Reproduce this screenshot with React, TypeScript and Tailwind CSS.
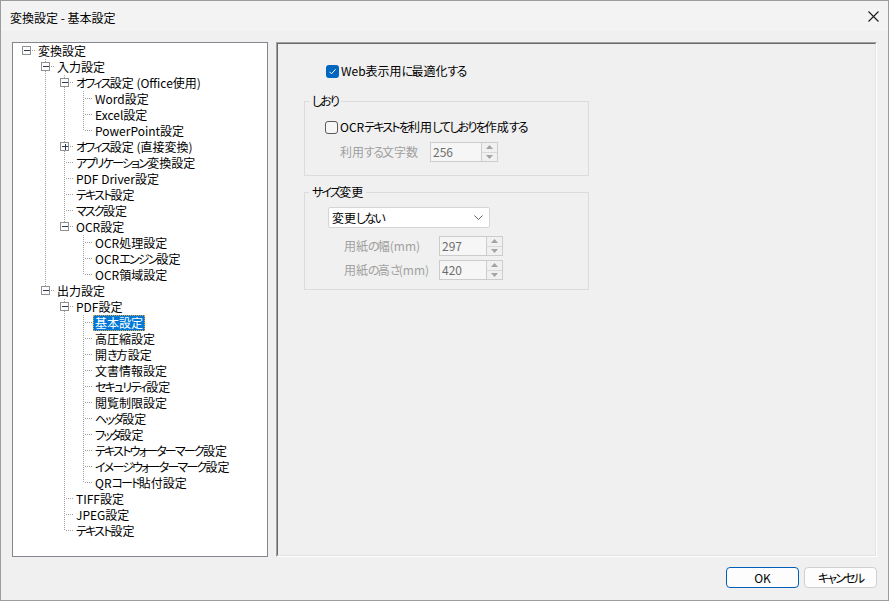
import React from 'react';

interface TreeNode {
  label: string;
  children?: TreeNode[];
  collapsed?: boolean;
  selected?: boolean;
}

interface Row {
  label: string;
  level: number;
  guides: boolean[];
  isLast: boolean;
  isRoot: boolean;
  box: 'minus' | 'plus' | null;
  selected: boolean;
}

const leaf = (label: string, selected = false): TreeNode => ({ label, selected });

const tree: TreeNode = {
  label: '変換設定',
  children: [
    {
      label: '入力設定',
      children: [
        { label: 'オフィス設定 (Office使用)', children: [leaf('Word設定'), leaf('Excel設定'), leaf('PowerPoint設定')] },
        { label: 'オフィス設定 (直接変換)', collapsed: true },
        leaf('アプリケーション変換設定'),
        leaf('PDF Driver設定'),
        leaf('テキスト設定'),
        leaf('マスク設定'),
        { label: 'OCR設定', children: [leaf('OCR処理設定'), leaf('OCRエンジン設定'), leaf('OCR領域設定')] },
      ],
    },
    {
      label: '出力設定',
      children: [
        {
          label: 'PDF設定',
          children: [
            leaf('基本設定', true),
            leaf('高圧縮設定'),
            leaf('開き方設定'),
            leaf('文書情報設定'),
            leaf('セキュリティ設定'),
            leaf('閲覧制限設定'),
            leaf('ヘッダ設定'),
            leaf('フッタ設定'),
            leaf('テキストウォーターマーク設定'),
            leaf('イメージウォーターマーク設定'),
            leaf('QRコード貼付設定'),
          ],
        },
        leaf('TIFF設定'),
        leaf('JPEG設定'),
        leaf('テキスト設定'),
      ],
    },
  ],
};

const flatten = (node: TreeNode, level: number, guides: boolean[], isLast: boolean, isRoot: boolean, out: Row[]) => {
  const expandable = !!node.children || !!node.collapsed;
  out.push({
    label: node.label,
    level,
    guides,
    isLast,
    isRoot,
    box: expandable ? (node.collapsed ? 'plus' : 'minus') : null,
    selected: !!node.selected,
  });
  if (node.children && !node.collapsed) {
    node.children.forEach((child, i) => {
      const last = i === node.children!.length - 1;
      // the root has no siblings, so no guide runs down its column
      flatten(child, level + 1, [...guides, isRoot ? false : !isLast], last, false, out);
    });
  }
};

const rows: Row[] = [];
flatten(tree, 0, [], true, true, rows);

// the UI font has narrow kana, so pull kana runs tighter
const Jp: React.FC<{ text: string }> = ({ text }) => {
  const parts = text.split(/([\u3040-\u30ff]+)/);
  return (
    <>
      {parts.map((p, i) =>
        /^[\u3040-\u30ff]+$/.test(p) ? (
          <span key={i} className="tracking-[-1.8px]">{p}</span>
        ) : (
          <span key={i}>{p}</span>
        )
      )}
    </>
  );
};

const LINE = '#a0a0a0';

const Connector: React.FC<{ row: Row }> = ({ row }) => {
  const w = 19 * (row.level + 1);
  const cx = 19 * row.level + 9.5;
  return (
    <svg width={w} height={16} className="shrink-0" shapeRendering="crispEdges">
      {row.guides.map((g, i) =>
        g ? <line key={i} x1={19 * i + 9.5} y1={0} x2={19 * i + 9.5} y2={16} stroke={LINE} strokeDasharray="1 1" /> : null
      )}
      {!row.isRoot && <line x1={cx} y1={0} x2={cx} y2={row.isLast ? 8 : 16} stroke={LINE} strokeDasharray="1 1" />}
      <line x1={cx + 1} y1={7.5} x2={w} y2={7.5} stroke={LINE} strokeDasharray="1 1" />
      {row.box && (
        <g>
          <rect x={cx - 4} y={3.5} width={8} height={8} fill="#fdfdfd" stroke="#919191" />
          <line x1={cx - 2.5} y1={7.5} x2={cx + 3.5} y2={7.5} stroke="#2b3a55" />
          {row.box === 'plus' && <line x1={cx + 0.5} y1={5} x2={cx + 0.5} y2={11} stroke="#2b3a55" />}
        </g>
      )}
    </svg>
  );
};

const Checkbox: React.FC<{ checked?: boolean; label: string }> = ({ checked, label }) => (
  <div className="flex items-center h-4">
    {checked ? (
      <span className="w-[13px] h-[13px] rounded-[3px] bg-[#0067c0] flex items-center justify-center">
        <svg width="9" height="9" viewBox="0 0 9 9">
          <path d="M1.5 4.8 L3.5 6.8 L7.6 2.2" fill="none" stroke="#ffffff" strokeWidth="1" />
        </svg>
      </span>
    ) : (
      <span className="w-[13px] h-[13px] rounded-[3px] border border-[#5b5b5b] bg-[#f6f6f6]" />
    )}
    <span className="ml-[2px] text-black whitespace-nowrap"><Jp text={label} /></span>
  </div>
);

const Spin: React.FC<{ value: string; width: number }> = ({ value, width }) => (
  <div className="flex h-5 border border-[#cccccc] bg-[#f6f6f6]" style={{ width }}>
    <div className="flex-1 pl-[2px] flex items-center text-[#6d6d6d]">{value}</div>
    <div className="w-[16px] flex flex-col border-l border-[#cccccc]">
      <div className="flex-1 flex items-center justify-center border-b border-[#d9d9d9] bg-[#f0f0f0]">
        <svg width="7" height="4" viewBox="0 0 7 4"><path d="M0 4 L3.5 0 L7 4 Z" fill="#a3a3a3" /></svg>
      </div>
      <div className="flex-1 flex items-center justify-center bg-[#f0f0f0]">
        <svg width="7" height="4" viewBox="0 0 7 4"><path d="M0 0 L3.5 4 L7 0 Z" fill="#a3a3a3" /></svg>
      </div>
    </div>
  </div>
);

const App: React.FC = () => {
  return (
    <div className="w-[889px] h-[601px] border border-[#9c9c9c] bg-[#f0f0f0] flex flex-col text-[12px] leading-4 text-black font-['Noto_Sans_CJK_JP',sans-serif] [font-feature-settings:'palt'] overflow-hidden">
      {/* title bar */}
      <div className="h-[30px] shrink-0 bg-[#f3f3f3] flex items-center justify-between pl-[9px] pr-[9px] pt-[3px]">
        <span className="text-[12px]">変換設定 - 基本設定</span>
        <svg width="11" height="11" viewBox="0 0 11 11" className="mb-[2px]">
          <path d="M0.5 0.5 L10.5 10.5 M10.5 0.5 L0.5 10.5" stroke="#1a1a1a" strokeWidth="1.1" />
        </svg>
      </div>

      <div className="flex-1 flex flex-col pl-[11px] pr-[11px] pt-[11px]">
        <div className="flex gap-[8px] h-[515px]">
          {/* tree */}
          <div className="w-[256px] shrink-0 h-[515px] border border-[#828790] bg-white pl-[4px] overflow-hidden">
            {rows.map((row, i) => (
              <div key={i} className="flex items-center h-4">
                <Connector row={row} />
                <span
                  className={
                    row.selected
                      ? 'px-[2px] h-4 leading-4 whitespace-nowrap bg-[#0078d7] text-white outline-1 outline-dotted outline-[#e8a33c] -outline-offset-1'
                      : 'px-[2px] h-4 leading-4 whitespace-nowrap'
                  }
                >
                  <Jp text={row.label} />
                </span>
              </div>
            ))}
          </div>

          {/* settings panel */}
          <div className="w-[601px] shrink-0 h-[515px] border border-t-[#a0a0a0] border-l-[#a0a0a0] border-b-white border-r-white">
            <div className="w-full h-full border border-t-[#696969] border-l-[#696969] border-b-[#e3e3e3] border-r-[#e3e3e3] flex flex-col">
              <div className="mt-[19px] pl-[48px]">
                <Checkbox checked label="Web表示用に最適化する" />
              </div>

              <fieldset className="ml-[26px] mt-[14px] w-[285px] border border-[#dcdcdc]">
                <legend className="ml-[4px] px-[3px] leading-4"><Jp text="しおり" /></legend>
                <div className="pl-[20px] pt-[10px] pb-[13px]">
                  <Checkbox label="OCRテキストを利用してしおりを作成する" />
                  <div className="flex items-center mt-[7px] pl-[15px]">
                    <span className="w-[90px] text-[#a0a0a0]"><Jp text="利用する文字数" /></span>
                    <Spin value="256" width={68} />
                  </div>
                </div>
              </fieldset>

              <fieldset className="ml-[26px] mt-[8px] w-[285px] border border-[#dcdcdc]">
                <legend className="ml-[4px] px-[3px] leading-4"><Jp text="サイズ変更" /></legend>
                <div className="pl-[23px] pt-[7px] pb-[9px]">
                  <div className="w-[162px] h-[21px] bg-white border border-[#d5d5d5] rounded-[2px] flex items-center justify-between pl-[3px] pr-[6px]">
                    <span><Jp text="変更しない" /></span>
                    <svg width="9" height="5" viewBox="0 0 9 5">
                      <path d="M0.5 0.5 L4.5 4.5 L8.5 0.5" fill="none" stroke="#606060" strokeWidth="1" />
                    </svg>
                  </div>
                  <div className="flex items-center mt-[8px] pl-[16px]">
                    <span className="w-[95px] text-[#a0a0a0]"><Jp text="用紙の幅(mm)" /></span>
                    <Spin value="297" width={64} />
                  </div>
                  <div className="flex items-center mt-[4px] pl-[16px]">
                    <span className="w-[95px] text-[#a0a0a0]"><Jp text="用紙の高さ(mm)" /></span>
                    <Spin value="420" width={64} />
                  </div>
                </div>
              </fieldset>
            </div>
          </div>
        </div>

        <div className="flex justify-end gap-[5px] mt-[10px]">
          <button className="w-[73px] h-[21px] rounded-[4px] border border-[#005fb8] bg-[#fdfdfd] text-[12px] leading-4">OK</button>
          <button className="w-[73px] h-[21px] rounded-[4px] border border-[#d0d0d0] bg-[#fdfdfd] text-[12px] leading-4"><Jp text="キャンセル" /></button>
        </div>
      </div>
    </div>
  );
};

export default App;
